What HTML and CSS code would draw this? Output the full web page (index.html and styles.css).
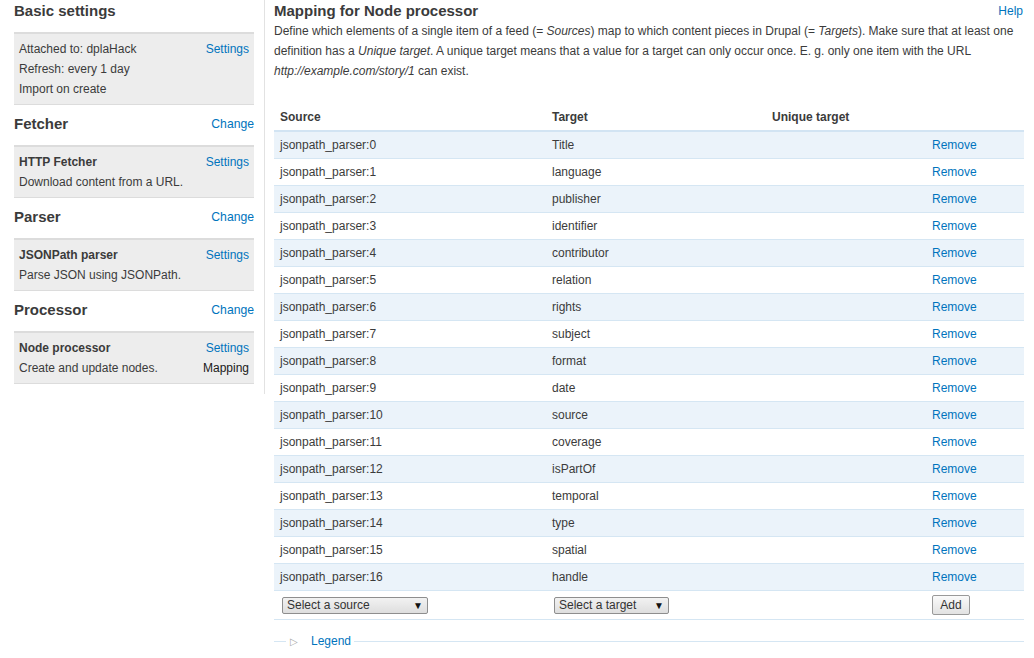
FILE: index.html
```html
<!DOCTYPE html>
<html>
<head>
<meta charset="utf-8">
<link rel="stylesheet" href="styles.css">
</head>
<body>
<div class="page">
  <aside class="sidebar">
    <section class="plugin">
      <div class="plugin-head"><h2>Basic settings</h2></div>
      <div class="plugin-box">
        <div class="line"><span>Attached to: dplaHack</span><a href="#">Settings</a></div>
        <div class="line"><span>Refresh: every 1 day</span></div>
        <div class="line"><span>Import on create</span></div>
      </div>
    </section>
    <section class="plugin">
      <div class="plugin-head"><h2>Fetcher</h2><a href="#">Change</a></div>
      <div class="plugin-box">
        <div class="line"><strong>HTTP Fetcher</strong><a href="#">Settings</a></div>
        <div class="line"><span>Download content from a URL.</span></div>
      </div>
    </section>
    <section class="plugin">
      <div class="plugin-head"><h2>Parser</h2><a href="#">Change</a></div>
      <div class="plugin-box">
        <div class="line"><strong>JSONPath parser</strong><a href="#">Settings</a></div>
        <div class="line"><span>Parse JSON using JSONPath.</span></div>
      </div>
    </section>
    <section class="plugin">
      <div class="plugin-head"><h2>Processor</h2><a href="#">Change</a></div>
      <div class="plugin-box">
        <div class="line"><strong>Node processor</strong><a href="#">Settings</a></div>
        <div class="line"><span>Create and update nodes.</span><span class="current">Mapping</span></div>
      </div>
    </section>
  </aside>
  <main class="main">
    <div class="main-head"><h2>Mapping for Node processor</h2><a href="#">Help</a></div>
    <p class="intro">Define which elements of a single item of a feed (= <em>Sources</em>) map to which content pieces in Drupal (= <em>Targets</em>). Make sure that at least one definition has a <em>Unique target</em>. A unique target means that a value for a target can only occur once. E. g. only one item with the URL <em>http://example.com/story/1</em> can exist.</p>
    <table class="mapping">
      <thead>
        <tr><th class="c-src">Source</th><th class="c-tgt">Target</th><th class="c-uni">Unique target</th><th class="c-op"></th></tr>
      </thead>
      <tbody>
        <tr class="even"><td>jsonpath_parser:0</td><td>Title</td><td></td><td><a href="#">Remove</a></td></tr>
        <tr><td>jsonpath_parser:1</td><td>language</td><td></td><td><a href="#">Remove</a></td></tr>
        <tr class="even"><td>jsonpath_parser:2</td><td>publisher</td><td></td><td><a href="#">Remove</a></td></tr>
        <tr><td>jsonpath_parser:3</td><td>identifier</td><td></td><td><a href="#">Remove</a></td></tr>
        <tr class="even"><td>jsonpath_parser:4</td><td>contributor</td><td></td><td><a href="#">Remove</a></td></tr>
        <tr><td>jsonpath_parser:5</td><td>relation</td><td></td><td><a href="#">Remove</a></td></tr>
        <tr class="even"><td>jsonpath_parser:6</td><td>rights</td><td></td><td><a href="#">Remove</a></td></tr>
        <tr><td>jsonpath_parser:7</td><td>subject</td><td></td><td><a href="#">Remove</a></td></tr>
        <tr class="even"><td>jsonpath_parser:8</td><td>format</td><td></td><td><a href="#">Remove</a></td></tr>
        <tr><td>jsonpath_parser:9</td><td>date</td><td></td><td><a href="#">Remove</a></td></tr>
        <tr class="even"><td>jsonpath_parser:10</td><td>source</td><td></td><td><a href="#">Remove</a></td></tr>
        <tr><td>jsonpath_parser:11</td><td>coverage</td><td></td><td><a href="#">Remove</a></td></tr>
        <tr class="even"><td>jsonpath_parser:12</td><td>isPartOf</td><td></td><td><a href="#">Remove</a></td></tr>
        <tr><td>jsonpath_parser:13</td><td>temporal</td><td></td><td><a href="#">Remove</a></td></tr>
        <tr class="even"><td>jsonpath_parser:14</td><td>type</td><td></td><td><a href="#">Remove</a></td></tr>
        <tr><td>jsonpath_parser:15</td><td>spatial</td><td></td><td><a href="#">Remove</a></td></tr>
        <tr class="even"><td>jsonpath_parser:16</td><td>handle</td><td></td><td><a href="#">Remove</a></td></tr>
        <tr class="form-row">
          <td><span class="select src-select"><select><option>Select a source</option></select></span></td>
          <td><span class="select tgt-select"><select><option>Select a target</option></select></span></td>
          <td></td>
          <td><button class="btn" type="button">Add</button></td>
        </tr>
      </tbody>
    </table>
    <fieldset class="legend-set">
      <legend><span class="tri">&#9655;</span><a href="#">Legend</a></legend>
    </fieldset>
  </main>
</div>
</body>
</html>
```
FILE: styles.css
```css
* { box-sizing: border-box; }
html, body { margin: 0; padding: 0; background: #fff; }
body {
  font-family: "Liberation Sans", Arial, sans-serif;
  font-size: 12px;
  line-height: 20px;
  color: #3b3b3b;
}
a { color: #0074bd; text-decoration: none; }
h2 { margin: 0; font-size: 15px; line-height: 20px; font-weight: bold; color: #3b3b3b; }

.page { display: flex; align-items: flex-start; }

.sidebar {
  width: 265px;
  padding: 1px 10px 10px 14px;
  border-right: 1px solid #e2e2e2;
  flex: none;
}
.plugin + .plugin { margin-top: 9px; }
.plugin-head {
  display: flex;
  justify-content: space-between;
  align-items: center;
  height: 20px;
  margin-bottom: 11px;
}
.plugin-head a { font-size: 12.2px; }
.plugin-box {
  background: #ededed;
  border-top: 2px solid #dcdcdc;
  border-bottom: 1px solid #dcdcdc;
  padding: 5px 5px 5px 5px;
}
.line { display: flex; justify-content: space-between; height: 20px; }
.line strong { font-weight: bold; }
.current { color: #1a1a1a; }

.main { flex: 1; padding: 1px 10px 0 9px; min-width: 0; }
.main-head { display: flex; justify-content: space-between; align-items: center; height: 20px; }
.main-head a { padding-right: 1px; }
.intro { margin: 0; }
.intro em { font-style: italic; }

.mapping {
  width: 100%;
  border-collapse: collapse;
  margin-top: 23px;
  table-layout: fixed;
}
.mapping th {
  text-align: left;
  font-weight: bold;
  padding: 6px 6px;
  line-height: 14px;
  border-bottom: 2px solid #d2e4f3;
}
.c-src { width: 272px; }
.c-tgt { width: 220px; }
.c-uni { width: 160px; }
.c-op { width: 98px; }
.mapping td {
  padding: 6px 6px;
  line-height: 14px;
  height: 27px;
  border-bottom: 1px solid #d5e6f3;
  vertical-align: middle;
}
.mapping tr.even td { background: #ebf3fa; }
.mapping .form-row td { padding: 4px 6px 4px; height: 29px; }

.select { position: relative; display: inline-block; margin-left: 2px; vertical-align: middle; }
.select select {
  appearance: none;
  -webkit-appearance: none;
  font-family: "Liberation Sans", Arial, sans-serif;
  font-size: 12px;
  color: #333;
  height: 17px;
  line-height: 15px;
  padding: 0 0 0 4px;
  border: 1px solid #8e8e8e;
  border-radius: 2px;
  background: linear-gradient(#f2f2f2, #dedede);
  display: block;
}
.src-select select { width: 146px; }
.tgt-select select { width: 115px; }
.select::after {
  content: "\25BC";
  position: absolute;
  right: 5px;
  top: 3px;
  font-size: 10px;
  line-height: 11px;
  color: #111;
  pointer-events: none;
}
.btn {
  font-family: "Liberation Sans", Arial, sans-serif;
  font-size: 12px;
  color: #333;
  height: 20px;
  width: 38px;
  padding: 0;
  border: 1px solid #999;
  border-radius: 2px;
  background: linear-gradient(#fafafa, #e2e2e2);
  vertical-align: middle;
}

.legend-set {
  margin: 11px 0 0 0;
  padding: 0 0 0 12px;
  border: 0;
  border-top: 1px solid #d5e6f3;
  min-width: 0;
}
.legend-set legend {
  padding: 0 3px 0 4px;
  line-height: 20px;
}
.tri { color: #aaa; font-size: 10px; margin-right: 13px; }
```
